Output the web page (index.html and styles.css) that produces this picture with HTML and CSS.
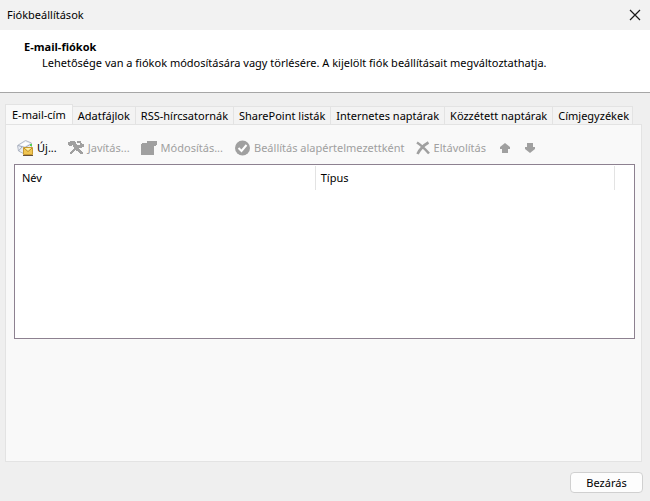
FILE: index.html
```html
<!DOCTYPE html>
<html lang="hu">
<head>
<meta charset="utf-8">
<title>Fiókbeállítások</title>
<link rel="stylesheet" href="styles.css">
</head>
<body>
<div class="dialog">
  <header class="titlebar">
    <h1 class="title">Fiókbeállítások</h1>
    <button class="close" type="button" aria-label="Bezárás">
      <svg width="12" height="12" viewBox="0 0 12 12"><path d="M1 1 11 11M11 1 1 11" fill="none" stroke="#1a1a1a" stroke-width="1.2"/></svg>
    </button>
  </header>
  <section class="intro">
    <h2 class="heading">E-mail-fiókok</h2>
    <p class="lead">Lehetősége van a fiókok módosítására vagy törlésére. A kijelölt fiók beállításait megváltoztathatja.</p>
  </section>
  <main class="content">
    <div class="tabs" role="tablist">
      <button class="tab active" type="button" role="tab" aria-selected="true">E-mail-cím</button>
      <button class="tab" type="button" role="tab">Adatfájlok</button>
      <button class="tab" type="button" role="tab">RSS-hírcsatornák</button>
      <button class="tab" type="button" role="tab">SharePoint listák</button>
      <button class="tab" type="button" role="tab">Internetes naptárak</button>
      <button class="tab" type="button" role="tab">Közzétett naptárak</button>
      <button class="tab" type="button" role="tab">Címjegyzékek</button>
    </div>
    <div class="panel" role="tabpanel">
      <div class="toolbar">
        <button class="tool" type="button">
          <svg width="16" height="16" viewBox="0 0 16 16">
            <path d="M.5 5.500 8.500 .5l6 2.500v6l-7 5-6-3z" fill="#e9edf5" stroke="#b4bac6"/>
            <path d="M1 5.500 8 7.500 14 4M1.500 11 5 7" fill="none" stroke="#a3abba"/>
            <path d="M3 5 8.500 2l4 1.500L8 6z" fill="#fff"/>
            <path d="M13 4h2v2h-2z" fill="#54d154"/>
            <path d="M6.500 7.500h9v7h-9z" fill="#f0c552" stroke="#c89a30"/>
            <path d="m7 8 4 3.500L15 8" fill="#fff0a5" stroke="#b98b24"/>
            <path d="M6 15.500h10" stroke="#66503a"/>
          </svg>
          Új...
        </button>
        <button class="tool" type="button" disabled>
          <svg width="16" height="16" viewBox="0 0 16 16" fill="#a0a0a0">
            <path d="M0 2h2V1h5v1h1v2h1v1h1v2H8v1H6V7H5V5H4v1H1V5H0z"/>
            <path d="M9 1h4v2h1v1h2v3h-2v1h-3v1h1v1h1v1h1v1h1v2h-3v-1h-1v-1h-1v-1H8v-1H7v1H6v1H5v1H4v1H2v-2h1v-1h1v-1h1V9h1V7h2V5h4V3H9z"/>
          </svg>
          Javítás...
        </button>
        <button class="tool" type="button" disabled>
          <svg width="16" height="16" viewBox="0 0 16 16" fill="#a0a0a0"><path d="M0 4h1V3h5V1h10v4h-1v1h-2v9H0z"/></svg>
          Módosítás...
        </button>
        <button class="tool" type="button" disabled>
          <svg width="16" height="16" viewBox="0 0 16 16"><circle cx="8.500" cy="8" r="7.500" fill="#a0a0a0"/><path d="m4.500 8 3 3L12.500 5" fill="none" stroke="#fff" stroke-width="2"/></svg>
          Beállítás alapértelmezettként
        </button>
        <button class="tool" type="button" disabled>
          <svg width="14" height="16" viewBox="0 0 14 16"><path d="M1 2.500C5 5 9 9 13 13.500M12.500 2.500C8 5 4 9 1.500 14" fill="none" stroke="#a0a0a0" stroke-width="2.600"/></svg>
          Eltávolítás
        </button>
        <button class="tool arrow" type="button" disabled aria-label="Fel">
          <svg width="10" height="16" viewBox="0 0 10 16"><path d="M5 3 0 7v2h2v4h6V9h2V7z" fill="#a0a0a0"/></svg>
        </button>
        <button class="tool arrow" type="button" disabled aria-label="Le">
          <svg width="10" height="16" viewBox="0 0 10 16"><path d="M5 13 0 9V7h2V3h6v4h2v2z" fill="#a0a0a0"/></svg>
        </button>
      </div>
      <div class="list">
        <table class="accounts">
          <thead>
            <tr><th class="name">Név</th><th class="type">Típus</th><td></td></tr>
          </thead>
        </table>
      </div>
    </div>
  </main>
  <footer class="footer"><button class="done" type="button">Bezárás</button></footer>
</div>
</body>
</html>
```
FILE: styles.css
```css
* {
  box-sizing: border-box;
}

body {
  margin: 0;
  background: #efefef;
  color: #000;
  font: 11px/16px "Noto Sans", "Open Sans", sans-serif;
}

button {
  margin: 0;
  padding: 0;
  border: 0;
  background: none;
  color: inherit;
  font: inherit;
}

svg {
  display: block;
  flex: none;
}

.dialog {
  display: flex;
  flex-direction: column;
  min-height: 100vh;
}

.titlebar {
  display: flex;
  align-items: center;
  justify-content: space-between;
  height: 30px;
  padding: 0 9px 0 7px;
  background: #f2f2f2;
}

.title {
  margin: 0;
  font-size: 11px;
  font-weight: 400;
}

.intro {
  padding: 9px 24px 21px;
  border-bottom: 1px solid #a6a6a6;
  background: #fff;
}

.heading {
  margin: 0;
  font-size: 11px;
  font-weight: 700;
  font-family: "Open Sans", sans-serif;
}

.lead {
  margin: 0;
  padding-left: 18px;
}

.content {
  display: flex;
  flex: 1;
  flex-direction: column;
  padding: 11px 8px 0 5px;
}

.tabs {
  display: flex;
  align-items: flex-end;
}

.tab {
  height: 18px;
  padding: 0 5px;
  border: 1px solid #e3e3e3;
  border-width: 1px 1px 0 0;
  background: #f3f3f3;
  line-height: 18px;
  white-space: nowrap;
}

.tab.active {
  height: 21px;
  margin-bottom: -1px;
  padding: 0 6px;
  border-left-width: 1px;
  background: #f9f9f9;
}

.tab:last-child {
  padding-right: 3px;
}

.panel {
  flex: 1;
  padding: 14px 6px 0 8px;
  border: 1px solid #e3e3e3;
  background: #f9f9f9;
}

.toolbar {
  display: flex;
  gap: 11px;
  height: 25px;
  padding-left: 3px;
}

.tool {
  display: flex;
  gap: 4px;
  align-items: center;
  height: 18px;
  white-space: nowrap;
}

.tool:disabled {
  color: #a0a0a0;
}

.arrow {
  padding: 0 1px 0 3px;
}

.list {
  height: 175px;
  padding-top: 1px;
  border: 1px solid #8d8190;
  background: #fff;
}

.accounts {
  width: 100%;
  border-collapse: collapse;
  table-layout: fixed;
}

.accounts th,
.accounts td {
  height: 24px;
  padding: 0 5px;
  font-weight: 400;
  text-align: left;
}

.accounts th {
  border-right: 1px solid #e3e3e3;
}

.accounts .name {
  width: 48.500%;
  padding-left: 7px;
}

.accounts .type {
  width: 48.400%;
}

.footer {
  display: flex;
  justify-content: flex-end;
  padding: 10px 7px 8px;
}

.done {
  min-width: 73px;
  height: 21px;
  border: 1px solid #d0d0d0;
  border-radius: 4px;
  background: #fdfdfd;
}
```
